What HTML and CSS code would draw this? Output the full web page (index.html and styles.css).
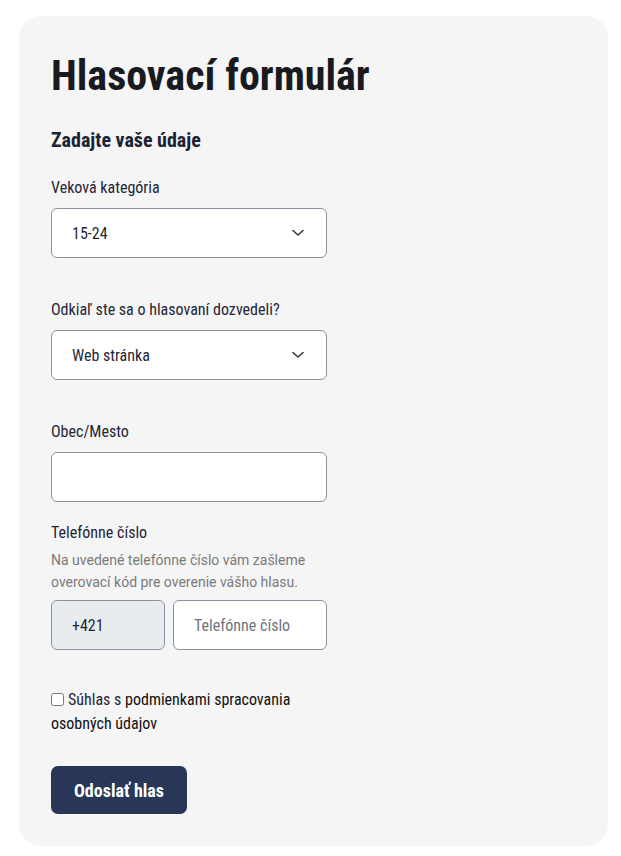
FILE: index.html
```html
<!DOCTYPE html>
<html lang="sk">
<head>
<meta charset="utf-8">
<title>Hlasovací formulár</title>
<link rel="stylesheet" href="styles.css">
</head>
<body>
<main class="page">
  <form class="card">
    <h1 class="title">Hlasovací formulár</h1>
    <h2 class="subtitle">Zadajte vaše údaje</h2>

    <div class="field field-select">
      <label class="label">Veková kategória</label>
      <div class="control select">
        <span class="value">15-24</span>
        <svg class="chevron" width="12" height="8" viewBox="0 0 12 8"><path d="M1 1.5 L6 6 L11 1.5" fill="none" stroke="#343a40" stroke-width="1.6" stroke-linecap="round" stroke-linejoin="round"/></svg>
      </div>
    </div>

    <div class="field field-select">
      <label class="label">Odkiaľ ste sa o hlasovaní dozvedeli?</label>
      <div class="control select">
        <span class="value">Web stránka</span>
        <svg class="chevron" width="12" height="8" viewBox="0 0 12 8"><path d="M1 1.5 L6 6 L11 1.5" fill="none" stroke="#343a40" stroke-width="1.6" stroke-linecap="round" stroke-linejoin="round"/></svg>
      </div>
    </div>

    <div class="field">
      <label class="label">Obec/Mesto</label>
      <div class="control"></div>
    </div>

    <div class="field field-phone">
      <label class="label">Telefónne číslo</label>
      <p class="help">Na uvedené telefónne číslo vám zašleme<br>overovací kód pre overenie vášho hlasu.</p>
      <div class="phone-row">
        <div class="control prefix"><span class="value">+421</span></div>
        <div class="control phone"><span class="placeholder">Telefónne číslo</span></div>
      </div>
    </div>

    <div class="consent"><input type="checkbox" class="check">Súhlas s <span class="consent-link">podmienkami spracovania osobných údajov</span></div>

    <div class="actions">
      <button type="button" class="submit">Odoslať hlas</button>
    </div>
  </form>
</main>
</body>
</html>
```

FILE: styles.css
```css
* { box-sizing: border-box; }

html, body {
  margin: 0;
  padding: 0;
  background: #ffffff;
}

body {
  font-family: "Roboto Condensed", "Liberation Sans Narrow", "Roboto", sans-serif;
  font-stretch: condensed;
  color: #1f2637;
}

.page {
  padding: 16px 13px 10px 19px;
}

.card {
  width: 589px;
  background: #f5f5f5;
  border-radius: 22px;
  padding: 35px 32px 32px 32px;
  display: flex;
  flex-direction: column;
}

.title {
  margin: 0;
  font-size: 42px;
  line-height: 50px;
  font-weight: 700;
  color: #181a1f;
}

.subtitle {
  margin: 27px 0 0 0;
  font-size: 20px;
  line-height: 24px;
  font-weight: 700;
  color: #1b2233;
}

.field {
  display: flex;
  flex-direction: column;
  width: 276px;
}

.subtitle + .field { margin-top: 24px; }

.field-select + .field { margin-top: 40px; }
.field + .field-phone { margin-top: 19px; }

.label {
  font-size: 16px;
  line-height: 24px;
  margin-bottom: 8px;
  color: #1f2637;
}

.control {
  height: 50px;
  background: #ffffff;
  border: 1px solid #8a939e;
  border-radius: 6px;
  display: flex;
  align-items: center;
  padding: 0 20px;
  font-size: 16px;
  color: #1f2637;
}

.select {
  justify-content: space-between;
  padding-right: 22px;
}

.chevron { display: block; }

.help {
  margin: -4px 0 7px 0;
  font-family: "Roboto", sans-serif;
  font-stretch: normal;
  font-size: 14px;
  line-height: 22px;
  color: #7a7a7a;
}

.phone-row {
  display: flex;
  gap: 8px;
}

.prefix {
  width: 114px;
  background: #e9ecef;
}

.phone {
  flex: 1;
}

.placeholder { color: #6c757d; }

.consent {
  margin-top: 38px;
  width: 276px;
  font-size: 16px;
  line-height: 24px;
  color: #1f2637;
}

.check {
  width: 13px;
  height: 13px;
  margin: 0 4px 0 0;
  vertical-align: -1px;
}

.consent-link { color: #111111; }

.actions {
  margin-top: 30px;
}

.submit {
  height: 48px;
  padding: 0 23px;
  background: #283757;
  color: #ffffff;
  border: 0;
  border-radius: 7px;
  font-family: inherit;
  font-stretch: condensed;
  font-size: 18px;
  font-weight: 700;
}
```
